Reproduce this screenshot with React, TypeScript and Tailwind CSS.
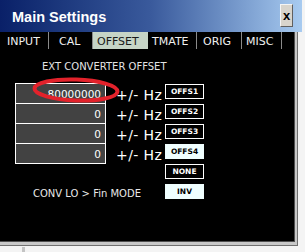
import React from "react";

const tabs = [
  { label: "INPUT", w: "w-[49px]", pl: "pl-[7px]", active: false },
  { label: "CAL", w: "w-[44px]", pl: "pl-[10px]", active: false },
  { label: "OFFSET", w: "w-[55px]", pl: "pl-[4px]", active: true },
  { label: "TMATE", w: "w-[49px]", pl: "pl-[4px]", active: false },
  { label: "ORIG", w: "w-[45px]", pl: "pl-[6px]", active: false },
  { label: "MISC", w: "w-[40px]", pl: "pl-[4px]", active: false },
];

const rows = [
  { value: "80000000", btn: "OFFS1", on: false },
  { value: "0", btn: "OFFS2", on: false },
  { value: "0", btn: "OFFS3", on: false },
  { value: "0", btn: "OFFS4", on: true },
];

const dv = { fontFamily: '"DejaVu Sans", Verdana, sans-serif' };

function Btn({ label, on }: { label: string; on: boolean }) {
  return (
    <div
      className={
        on
          ? "w-[39px] h-[15px] flex items-center justify-center bg-[#f0ffff] text-black text-[7.5px] font-bold leading-none"
          : "w-[39px] h-[15px] flex items-center justify-center bg-black border-[1.5px] border-white text-white text-[7.5px] font-bold leading-none"
      }
      style={dv}
    >
      {label}
    </div>
  );
}

export default function App() {
  return (
    <div className="relative w-[305px] h-[252px] bg-[#f4f4f4] overflow-hidden">
      <div className="flex flex-col w-[302px]">
        {/* title bar */}
        <div className="h-[32px] w-[302px] flex items-center justify-between bg-gradient-to-r from-[#0a2068] via-[#3a5a9c] to-[#a8cbf0] pl-[12px] pr-[9px]">
          <span
            className="text-white font-bold text-[14.5px] leading-none mt-[3px]"
            style={{ fontFamily: '"Liberation Sans", Arial, sans-serif' }}
          >
            Main Settings
          </span>
          <div className="w-[13px] h-[23px] mt-[-1px] bg-[#d8d4cc] border-t border-l border-t-[#f4f4f4] border-l-[#f4f4f4] border-r border-b border-r-[#606060] border-b-[#606060] flex items-center justify-center">
            <span
              className="text-black font-bold text-[13px] leading-none mb-[1px]"
              style={{ fontFamily: '"Liberation Sans", Arial, sans-serif' }}
            >
              x
            </span>
          </div>
        </div>
        {/* body */}
        <div className="w-[298px] h-[214px] bg-[#707070] pr-px pb-px">
          <div className="w-full h-full bg-[#c8c8c8] pr-[2px] pb-[3px]">
            <div className="w-full h-full bg-[#505050] pr-px pb-px">
              <div className="w-full h-full bg-black flex flex-col">
                {/* tabs */}
                <div className="h-[17px] flex bg-black">
                  {tabs.map((t) => (
                    <div
                      key={t.label}
                      className={
                        (t.active
                          ? "bg-[#c6d4c6] text-[#1a1a1a] "
                          : "bg-black text-[#f0f0f0] border-r border-[#8a8a8a] ") +
                        t.w +
                        " " +
                        t.pl +
                        " h-full flex items-center pt-[2px] text-[11px] leading-none"
                      }
                      style={dv}
                    >
                      {t.label}
                    </div>
                  ))}
                </div>
                {/* content */}
                <div className="flex flex-col pl-[15px] pt-[11px]">
                  <div
                    className="pl-[27px] h-[13px] text-[10px] leading-[13px] text-[#e4e4e4]"
                    style={dv}
                  >
                    EXT CONVERTER OFFSET
                  </div>
                  <div className="flex flex-col mt-[10px]">
                    {rows.map((r) => (
                      <div key={r.btn} className="flex items-start h-[20px]">
                        <div
                          className="w-[91px] h-[21px] shrink-0 border border-white bg-[#424242] text-white text-[10.5px] flex items-center justify-end pr-[4px] pt-px leading-none"
                          style={dv}
                        >
                          {r.value}
                        </div>
                        <div
                          className="w-[59px] shrink-0 h-[21px] pl-[10px] flex items-center whitespace-nowrap text-white text-[14px] tracking-[0.4px] leading-none pt-[2px]"
                          style={dv}
                        >
                          +/- Hz
                        </div>
                        <div className="mt-[1px]">
                          <Btn label={r.btn} on={r.on} />
                        </div>
                      </div>
                    ))}
                  </div>
                  <div className="flex mt-[1px] pl-[150px]">
                    <Btn label="NONE" on={false} />
                  </div>
                  <div className="flex items-center mt-[5px]">
                    <div
                      className="w-[150px] pl-[18px] text-[10px] text-[#e8e8e8] leading-none pt-[4px] whitespace-nowrap"
                      style={dv}
                    >
                      CONV LO &gt; Fin MODE
                    </div>
                    <Btn label="INV" on={true} />
                  </div>
                </div>
              </div>
            </div>
          </div>
        </div>
      </div>
      <div className="absolute left-[22px] top-[247px] w-[3px] h-[5px] bg-[#c4c4c4]" />
      {/* red annotation ellipse */}
      <svg className="absolute left-0 top-0" width="305" height="252" viewBox="0 0 305 252">
        <ellipse
          cx="76"
          cy="90"
          rx="41.5"
          ry="10.5"
          fill="none"
          stroke="#e3222b"
          strokeWidth="4"
          transform="rotate(2 76 90)"
        />
      </svg>
    </div>
  );
}
